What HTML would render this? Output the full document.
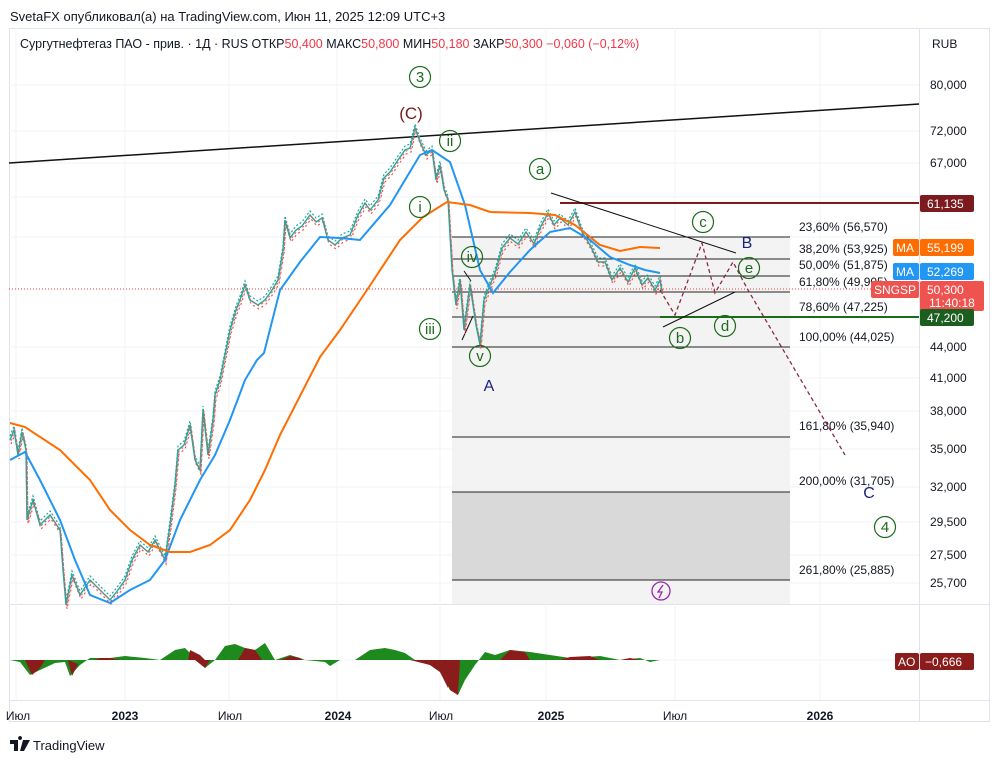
<!DOCTYPE html>
<html><head><meta charset="utf-8"><style>
body{margin:0;background:#fff;width:1000px;height:763px;overflow:hidden;font-family:"Liberation Sans",sans-serif}
svg text{font-family:"Liberation Sans",sans-serif}
</style></head><body>
<svg width="1000" height="763" viewBox="0 0 1000 763" xmlns="http://www.w3.org/2000/svg">
<defs>
<polyline id="pr" points="10,440 14,430 18,455 22,432 26,450 27,520 33,500 40,525 50,515 60,530 63,570 66,605 72,575 80,595 90,580 100,590 110,600 118,590 125,580 132,560 140,545 148,552 155,540 165,560 170,525 175,485 178,450 184,445 190,425 195,460 200,470 203,410 208,455 213,420 215,395 220,380 226,350 230,330 236,310 240,300 245,285 250,300 258,305 265,300 272,290 278,280 283,250 285,220 290,238 296,230 302,226 310,215 316,222 322,218 328,240 335,245 342,238 350,235 358,215 365,203 370,210 378,200 384,178 390,172 398,160 405,150 410,148 415,128 420,142 426,155 432,150 436,180 440,165 444,190 448,200 452,270 456,305 460,280 464,330 470,285 476,325 480,345 484,300 490,285 496,270 502,248 510,238 518,244 526,232 534,244 540,228 548,213 554,225 560,218 568,225 575,212 582,232 590,245 598,262 605,262 612,280 620,268 628,282 635,268 642,285 648,278 655,290 660,280 662,292"/>
</defs>
<text x="10" y="21" font-size="13" fill="#131722">SvetaFX опубликовал(а) на TradingView.com, Июн 11, 2025 12:09 UTC+3</text>
<rect x="9.5" y="28.5" width="980" height="693" fill="none" stroke="#e0e3eb"/>
<line x1="919.5" y1="28" x2="919.5" y2="721" stroke="#e0e3eb"/>
<line x1="9" y1="604.5" x2="990" y2="604.5" stroke="#e0e3eb"/>
<line x1="9" y1="700.5" x2="990" y2="700.5" stroke="#e0e3eb"/>
<g stroke="#f2f3f5">
<line x1="16" y1="28" x2="16" y2="700"/><line x1="125" y1="28" x2="125" y2="700"/><line x1="229" y1="28" x2="229" y2="700"/><line x1="337" y1="28" x2="337" y2="700"/><line x1="440" y1="28" x2="440" y2="700"/><line x1="546" y1="28" x2="546" y2="700"/><line x1="675" y1="28" x2="675" y2="700"/><line x1="820" y1="28" x2="820" y2="700"/>
<line x1="9" y1="85" x2="919" y2="85"/><line x1="9" y1="131" x2="919" y2="131"/><line x1="9" y1="163" x2="919" y2="163"/><line x1="9" y1="197" x2="919" y2="197"/><line x1="9" y1="237" x2="919" y2="237"/><line x1="9" y1="347" x2="919" y2="347"/><line x1="9" y1="378" x2="919" y2="378"/><line x1="9" y1="411" x2="919" y2="411"/><line x1="9" y1="449" x2="919" y2="449"/><line x1="9" y1="487" x2="919" y2="487"/><line x1="9" y1="522" x2="919" y2="522"/><line x1="9" y1="555" x2="919" y2="555"/><line x1="9" y1="583" x2="919" y2="583"/><line x1="9" y1="660" x2="919" y2="660"/>
</g>
<text x="20" y="48" font-size="12.5" fill="#131722">Сургутнефтегаз ПАО - прив. · 1Д · RUS  ОТКР<tspan fill="#f23645">50,400</tspan>  МАКС<tspan fill="#f23645">50,800</tspan>  МИН<tspan fill="#f23645">50,180</tspan>  ЗАКР<tspan fill="#f23645">50,300</tspan>  <tspan fill="#f23645">−0,060 (−0,12%)</tspan></text>
<rect x="452" y="237" width="338" height="367" fill="#f3f3f3"/>
<rect x="452" y="492" width="338" height="88" fill="#d9d9d9"/>
<g stroke="#222" stroke-width="1">
<line x1="452" y1="237" x2="790" y2="237"/><line x1="452" y1="259" x2="790" y2="259"/><line x1="452" y1="276" x2="790" y2="276"/><line x1="452" y1="292" x2="790" y2="292"/><line x1="452" y1="317" x2="790" y2="317"/><line x1="452" y1="347" x2="790" y2="347"/><line x1="452" y1="437" x2="790" y2="437"/><line x1="452" y1="492" x2="790" y2="492"/><line x1="452" y1="580" x2="790" y2="580"/>
</g>
<g font-size="12" fill="#131722">
<text x="799" y="231">23,60% (56,570)</text><text x="799" y="253">38,20% (53,925)</text><text x="799" y="269">50,00% (51,875)</text><text x="799" y="286">61,80% (49,905)</text><text x="799" y="311">78,60% (47,225)</text><text x="799" y="341">100,00% (44,025)</text><text x="799" y="430">161,80% (35,940)</text><text x="799" y="485">200,00% (31,705)</text><text x="799" y="574">261,80% (25,885)</text>
</g>
<line x1="9" y1="163" x2="919" y2="104" stroke="#111" stroke-width="1.5"/>
<line x1="560" y1="203" x2="919" y2="203" stroke="#7b1a1f" stroke-width="2"/>
<line x1="660" y1="317" x2="919" y2="317" stroke="#1b6b1b" stroke-width="2"/>
<line x1="9" y1="289" x2="919" y2="289" stroke="#f23645" stroke-dasharray="1,2"/>
<line x1="551" y1="193" x2="736" y2="253" stroke="#111"/>
<line x1="663" y1="327" x2="735" y2="292" stroke="#111"/>
<line x1="464" y1="271" x2="471" y2="281" stroke="#111"/><line x1="462" y1="340" x2="473" y2="316" stroke="#111"/>
<polyline points="660,290 675,315 702,243 715,293 733,262 748,290 845,455" fill="none" stroke="#8a2b3f" stroke-width="1.3" stroke-dasharray="4,3"/>
<!-- price as candle-ish band -->
<use href="#pr" fill="none" stroke="#26a69a" stroke-width="1.2" transform="translate(0,-4)" stroke-dasharray="2,2"/>
<use href="#pr" fill="none" stroke="#ef5350" stroke-width="1.2" transform="translate(1,4)" stroke-dasharray="2,3"/>
<use href="#pr" fill="none" stroke="#26a69a" stroke-width="1.4"/>
<use href="#pr" fill="none" stroke="#ef5350" stroke-width="1" stroke-dasharray="2,3" transform="translate(1,1)"/>
<polyline points="10,460 25,452 40,480 60,520 75,560 90,595 110,603 130,590 150,580 165,560 180,520 200,480 215,455 230,420 245,380 257,360 264,353 280,290 300,262 320,237 340,238 360,240 390,205 420,155 432,150 450,162 465,205 480,270 493,293 510,272 530,250 550,232 570,228 590,240 610,257 630,265 645,270 660,273" fill="none" stroke="#2196f3" stroke-width="2"/>
<polyline points="10,423 25,427 60,450 90,480 110,510 130,530 150,545 170,552 190,552 210,545 230,530 250,500 265,470 280,435 320,357 340,330 367,290 400,240 423,217 447,202 470,205 490,212 530,213 555,215 575,225 600,245 620,251 640,247 660,248" fill="none" stroke="#ff6d00" stroke-width="2"/>
<g fill="none" stroke="#1b6b1b" stroke-width="1.2">
<circle cx="420" cy="77" r="10.5"/><circle cx="450" cy="141" r="10.5"/><circle cx="420" cy="207" r="10.5"/><circle cx="430" cy="329" r="10.5"/><circle cx="472" cy="257" r="10.5"/><circle cx="480" cy="356" r="10.5"/><circle cx="540" cy="169" r="10.5"/><circle cx="703" cy="222" r="10.5"/><circle cx="680" cy="338" r="10.5"/><circle cx="725" cy="326" r="10.5"/><circle cx="749" cy="268" r="10.5"/><circle cx="885" cy="527" r="10.5"/>
</g>
<g font-size="15" fill="#1b6b1b" text-anchor="middle">
<text x="420" y="82">3</text><text x="450" y="146">ii</text><text x="420" y="212">i</text><text x="430" y="334">iii</text><text x="472" y="262">iv</text><text x="480" y="361">v</text><text x="540" y="174">a</text><text x="703" y="227">c</text><text x="680" y="343">b</text><text x="725" y="331">d</text><text x="749" y="273">e</text><text x="885" y="532">4</text>
</g>
<text x="411" y="119" font-size="17" fill="#7b1a1f" text-anchor="middle">(C)</text>
<text x="489" y="391" font-size="16" fill="#1a237e" text-anchor="middle">A</text>
<text x="747" y="248" font-size="16" fill="#1a237e" text-anchor="middle">B</text>
<text x="869" y="498" font-size="16" fill="#1a237e" text-anchor="middle">C</text>
<circle cx="661" cy="591" r="9" fill="none" stroke="#9c27b0" stroke-width="1.3"/>
<path d="M663 585 L658 592 L662 592 L659 598" fill="none" stroke="#9c27b0" stroke-width="1.3"/>
<path d="M10 660 L20 662 L30 675 L40 670 L55 663 L65 662 L70 676 L80 665 L90 658 L110 658 L125 656 L145 658 L160 660 L175 650 L185 648 L192 655 L205 668 L215 660 L225 646 L235 644 L245 648 L255 650 L265 643 L275 660 L290 655 L300 658 L305 660 L325 662 L330 666 L340 660 L355 660 L370 650 L385 648 L395 650 L405 653 L415 660 L430 665 L440 672 L450 690 L458 695 L465 680 L475 665 L485 652 L495 655 L510 650 L530 652 L550 655 L570 658 L600 656 L620 660 L640 658 L650 662 L660 660 Z" fill="#1e8a1e"/>
<path d="M25 660 L32 675 L40 668 L45 660 Z M68 660 L72 676 L78 664 Z M195 660 L205 668 L210 660 Z M95 660 L100 658 L110 658 L120 660 Z M188 660 L190 650 L200 655 L205 660Z M238 660 L245 648 L255 650 L262 660 Z M280 660 L290 656 L300 658 L302 660Z M410 660 L430 665 L440 672 L448 688 L452 660 Z M440 660 L450 690 L458 695 L460 660Z M500 660 L510 650 L525 652 L530 660Z M560 660 L570 657 L590 656 L600 660Z M620 660 L630 658 L640 660Z" fill="#8b1c1c"/>
<g font-size="12" fill="#131722">
<text x="930" y="89">80,000</text><text x="930" y="135">72,000</text><text x="930" y="167">67,000</text><text x="930" y="351">44,000</text><text x="930" y="382">41,000</text><text x="930" y="415">38,000</text><text x="930" y="453">35,000</text><text x="930" y="491">32,000</text><text x="930" y="526">29,500</text><text x="930" y="559">27,500</text><text x="930" y="587">25,700</text>
<text x="932" y="48">RUB</text>
</g>
<rect x="920" y="195" width="54" height="17" rx="2" fill="#7b1a1f"/><text x="927" y="208" font-size="12" fill="#fff">61,135</text>
<rect x="893" y="239" width="26" height="17" rx="2" fill="#ff6d00"/><text x="896" y="252" font-size="12" fill="#fff">MA</text>
<rect x="920" y="239" width="54" height="17" rx="2" fill="#ff6d00"/><text x="927" y="252" font-size="12" fill="#fff">55,199</text>
<rect x="893" y="263" width="26" height="17" rx="2" fill="#2196f3"/><text x="896" y="276" font-size="12" fill="#fff">MA</text>
<rect x="920" y="263" width="54" height="17" rx="2" fill="#2196f3"/><text x="927" y="276" font-size="12" fill="#fff">52,269</text>
<rect x="871" y="281" width="48" height="17" rx="2" fill="#ef5350"/><text x="874" y="294" font-size="12" fill="#fff">SNGSP</text>
<rect x="920" y="281" width="64" height="30" rx="2" fill="#ef5350"/><text x="927" y="294" font-size="12" fill="#fff">50,300</text><text x="929" y="307" font-size="12" fill="#fff">11:40:18</text>
<rect x="920" y="309" width="54" height="17" rx="2" fill="#1b5e20"/><text x="927" y="322" font-size="12" fill="#fff">47,200</text>
<rect x="895" y="653" width="24" height="17" rx="2" fill="#8b1c1c"/><text x="898" y="666" font-size="12" fill="#fff">AO</text>
<rect x="920" y="653" width="54" height="17" rx="2" fill="#8b1c1c"/><text x="925" y="666" font-size="12" fill="#fff">−0,666</text>
<g font-size="12" fill="#131722" text-anchor="middle">
<text x="18" y="720">Июл</text><text x="125" y="720" font-weight="bold">2023</text><text x="230" y="720">Июл</text><text x="338" y="720" font-weight="bold">2024</text><text x="441" y="720">Июл</text><text x="551" y="720" font-weight="bold">2025</text><text x="675" y="720">Июл</text><text x="820" y="720" font-weight="bold">2026</text>
</g>
<path d="M10 740 H18 V751 H14 V744 H10 Z M20 740 a2 2 0 1 1 0.1 0 Z" fill="#131722"/>
<path d="M23 740 H30 L24 751 H20 Z" fill="#131722"/>
<text x="33" y="750" font-size="13" fill="#131722">TradingView</text>
</svg>
</body></html>
